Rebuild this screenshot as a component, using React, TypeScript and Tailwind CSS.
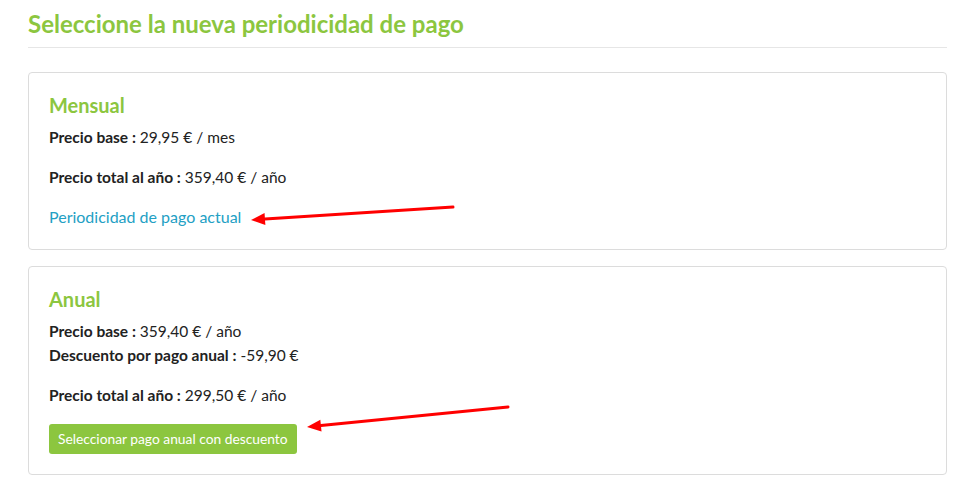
import React from "react";

function Arrow({ x1, y1, x2, y2 }: { x1: number; y1: number; x2: number; y2: number }) {
  const ang = Math.atan2(y2 - y1, x2 - x1);
  const len = 14;
  const w = 6;
  const bx = x2 - len * Math.cos(ang);
  const by = y2 - len * Math.sin(ang);
  const px = -Math.sin(ang) * w;
  const py = Math.cos(ang) * w;
  return (
    <g>
      <line x1={x1} y1={y1} x2={bx} y2={by} stroke="#ff0000" strokeWidth={3} strokeLinecap="round" />
      <polygon points={`${x2},${y2} ${bx + px},${by + py} ${bx - px},${by - py}`} fill="#ff0000" />
    </g>
  );
}

export default function App() {
  return (
    <div
      className="relative w-[969px] h-[486px] bg-white pl-[28px] pr-[22px] text-[15.5px] text-[#222]"
      style={{ fontFamily: "Lato, 'Open Sans', sans-serif" }}
    >
      <h1 className="pt-[9px] pb-[8px] text-[24px] leading-[30px] font-bold text-[#8cc63f] border-b border-[#e6e6e6]">
        Seleccione la nueva periodicidad de pago
      </h1>

      <div className="mt-[24px] border border-[#dcdcdc] rounded-[4px] px-[20px] py-[20px]">
        <h2 className="text-[20px] leading-[24px] font-bold text-[#8cc63f] mb-[8px]">Mensual</h2>
        <p className="leading-[24px]">
          <b>Precio base :</b> 29,95 € / mes
        </p>
        <p className="leading-[24px] mt-[16px]">
          <b>Precio total al año :</b> 359,40 € / año
        </p>
        <p className="leading-[24px] mt-[16px] text-[16px] text-[#23a0c4]">Periodicidad de pago actual</p>
      </div>

      <div className="mt-[16px] border border-[#dcdcdc] rounded-[4px] px-[20px] py-[20px]">
        <h2 className="text-[20px] leading-[24px] font-bold text-[#8cc63f] mb-[8px]">Anual</h2>
        <p className="leading-[24px]">
          <b>Precio base :</b> 359,40 € / año
        </p>
        <p className="leading-[24px]">
          <b>Descuento por pago anual :</b> -59,90 €
        </p>
        <p className="leading-[24px] mt-[16px]">
          <b>Precio total al año :</b> 299,50 € / año
        </p>
        <button className="mt-[17px] h-[30px] px-[9px] rounded-[3px] bg-[#8cc63f] text-white text-[13.8px] leading-[30px]">
          Seleccionar pago anual con descuento
        </button>
      </div>

      <svg className="absolute left-0 top-0 pointer-events-none" width={969} height={486}>
        <Arrow x1={453} y1={207} x2={251} y2={220} />
        <Arrow x1={508} y1={407} x2={307} y2={427} />
      </svg>
    </div>
  );
}
